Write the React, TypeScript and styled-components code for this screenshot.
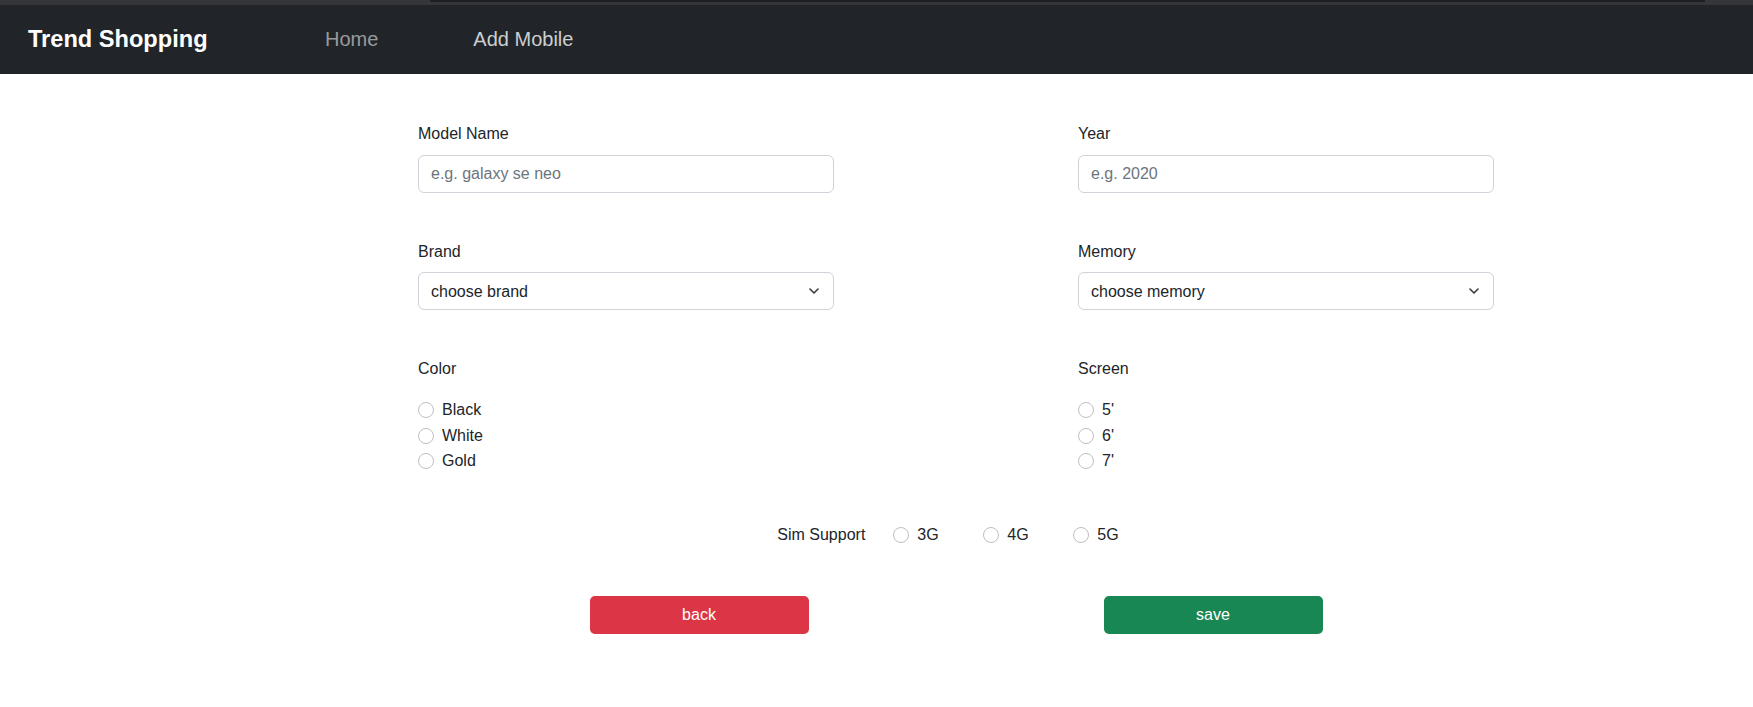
import React from "react";
import styled, { createGlobalStyle } from "styled-components";

const GlobalStyle = createGlobalStyle`
  * { box-sizing: border-box; }
  body {
    margin: 0;
    font-family: "Liberation Sans", Arial, sans-serif;
    color: #212529;
    background: #fff;
  }
`;

const TopStrip = styled.div`
  height: 5px;
  background: #35363a;
  display: flex;
`;

const StripLine = styled.div`
  margin-left: 430px;
  width: 1275px;
  height: 2px;
  background: #1e1f22;
`;

const NavBar = styled.nav`
  height: 69px;
  background: #212529;
  display: flex;
  align-items: center;
  padding-left: 28px;
`;

const Brand = styled.a`
  width: 297px;
  font-size: 23.6px;
  font-weight: 700;
  color: #fff;
  text-decoration: none;
`;

const NavLinks = styled.div`
  display: flex;
  gap: 95px;
`;

const NavLink = styled.a<{ $active?: boolean }>`
  font-size: 20px;
  color: ${(p) => (p.$active ? "rgba(255,255,255,0.78)" : "rgba(255,255,255,0.55)")};
  text-decoration: none;
`;

const Main = styled.main`
  padding: 48px 0 60px 418px;
`;

const Form = styled.form`
  width: 1076px;
  display: flex;
  flex-direction: column;
`;

const Grid = styled.div`
  display: grid;
  grid-template-columns: 416px 416px;
  column-gap: 244px;
  row-gap: 47px;
`;

const Field = styled.div`
  display: flex;
  flex-direction: column;
`;

const Label = styled.label<{ $gap?: number }>`
  font-size: 16px;
  line-height: 24px;
  margin-bottom: ${(p) => p.$gap ?? 9}px;
`;

const TextInput = styled.input`
  height: 38px;
  padding: 6px 12px;
  font-family: inherit;
  font-size: 16px;
  border: 1px solid #ced4da;
  border-radius: 6px;
  color: #212529;
  outline: none;
  &::placeholder {
    color: #6c757d;
  }
`;

const SelectWrap = styled.div`
  position: relative;
  height: 38px;
`;

const Select = styled.select`
  width: 100%;
  height: 38px;
  padding: 6px 36px 6px 12px;
  font-family: inherit;
  font-size: 16px;
  border: 1px solid #ced4da;
  border-radius: 6px;
  color: #212529;
  background: #fff;
  appearance: none;
  outline: none;
`;

const Chevron = styled.svg`
  position: absolute;
  right: 15px;
  top: 16px;
  width: 10px;
  height: 6px;
  pointer-events: none;
`;

const RadioList = styled.div`
  display: flex;
  flex-direction: column;
  gap: 1.5px;
`;

const RadioItem = styled.label<{ $width?: number }>`
  display: flex;
  align-items: center;
  gap: 8px;
  height: 24px;
  font-size: 16px;
  line-height: 24px;
  color: #212529;
  ${(p) => (p.$width ? `width: ${p.$width}px;` : "")}
`;

const Radio = styled.input.attrs({ type: "radio" })`
  appearance: none;
  margin: 0;
  width: 16px;
  height: 16px;
  border-radius: 50%;
  border: 1px solid #bfbfbf;
  background: #fff;
  flex: none;
`;

const SimRow = styled.div`
  margin-top: 50px;
  display: flex;
  justify-content: center;
  align-items: center;
  padding-right: 16px;
`;

const SimLabel = styled.span`
  font-size: 16px;
  line-height: 24px;
  margin-right: 28px;
`;

const ButtonRow = styled.div`
  margin-top: 49px;
  display: flex;
  justify-content: center;
  gap: 295px;
`;

const Button = styled.button<{ $variant: "danger" | "success" }>`
  width: 219px;
  height: 38px;
  border: none;
  border-radius: 5px;
  font-family: inherit;
  font-size: 16px;
  color: #fff;
  background: ${(p) => (p.$variant === "danger" ? "#dc3545" : "#198754")};
`;

const ChevronIcon = () => (
  <Chevron viewBox="0 0 10 6">
    <path d="M1 1 5 5 9 1" fill="none" stroke="#343a40" strokeWidth="1.6" strokeLinecap="round" strokeLinejoin="round" />
  </Chevron>
);

export default function App() {
  return (
    <>
      <GlobalStyle />
      <TopStrip>
        <StripLine />
      </TopStrip>
      <NavBar>
        <Brand href="#">Trend Shopping</Brand>
        <NavLinks>
          <NavLink href="#">Home</NavLink>
          <NavLink href="#" $active>
            Add Mobile
          </NavLink>
        </NavLinks>
      </NavBar>
      <Main>
        <Form onSubmit={(e) => e.preventDefault()}>
          <Grid>
            <Field>
              <Label>Model Name</Label>
              <TextInput placeholder="e.g. galaxy se neo" />
            </Field>
            <Field>
              <Label>Year</Label>
              <TextInput placeholder="e.g. 2020" />
            </Field>
            <Field>
              <Label $gap={8}>Brand</Label>
              <SelectWrap>
                <Select defaultValue="">
                  <option value="">choose brand</option>
                </Select>
                <ChevronIcon />
              </SelectWrap>
            </Field>
            <Field>
              <Label $gap={8}>Memory</Label>
              <SelectWrap>
                <Select defaultValue="">
                  <option value="">choose memory</option>
                </Select>
                <ChevronIcon />
              </SelectWrap>
            </Field>
            <Field>
              <Label $gap={17}>Color</Label>
              <RadioList>
                {["Black", "White", "Gold"].map((c) => (
                  <RadioItem key={c}>
                    <Radio name="color" />
                    {c}
                  </RadioItem>
                ))}
              </RadioList>
            </Field>
            <Field>
              <Label $gap={17}>Screen</Label>
              <RadioList>
                {["5'", "6'", "7'"].map((c) => (
                  <RadioItem key={c}>
                    <Radio name="screen" />
                    {c}
                  </RadioItem>
                ))}
              </RadioList>
            </Field>
          </Grid>
          <SimRow>
            <SimLabel>Sim Support</SimLabel>
            <RadioItem $width={90}>
              <Radio name="sim" />
              3G
            </RadioItem>
            <RadioItem $width={90}>
              <Radio name="sim" />
              4G
            </RadioItem>
            <RadioItem>
              <Radio name="sim" />
              5G
            </RadioItem>
          </SimRow>
          <ButtonRow>
            <Button type="button" $variant="danger">
              back
            </Button>
            <Button type="submit" $variant="success">
              save
            </Button>
          </ButtonRow>
        </Form>
      </Main>
    </>
  );
}
